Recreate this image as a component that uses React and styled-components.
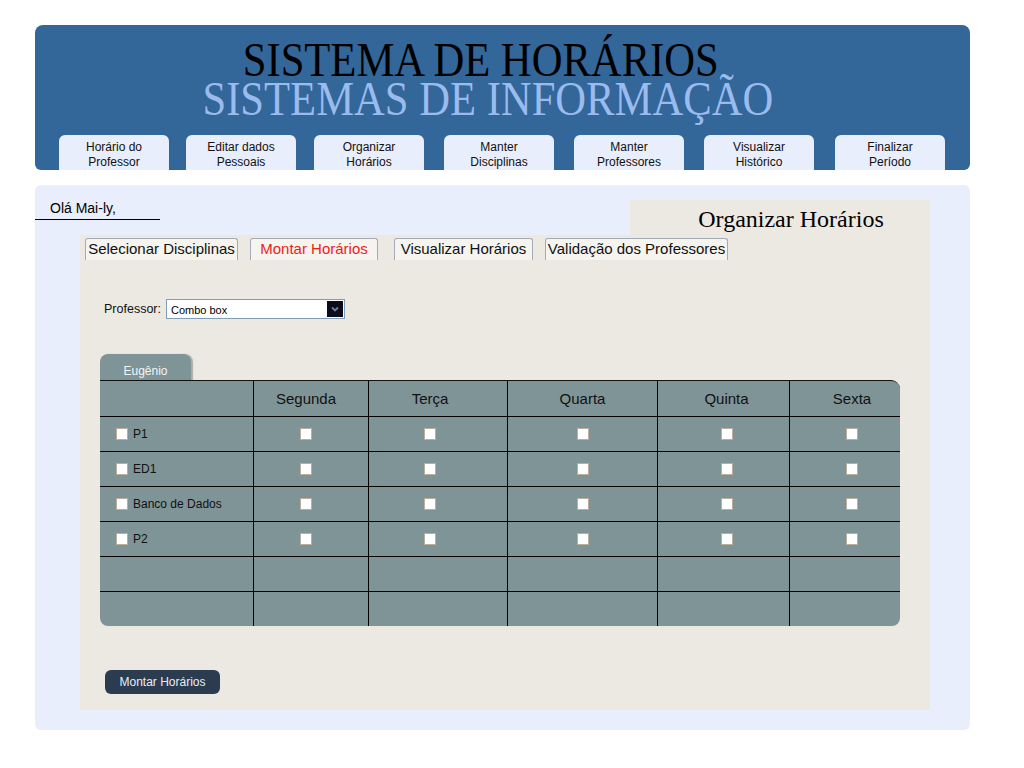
import React from "react";
import styled, { createGlobalStyle } from "styled-components";

const GlobalStyle = createGlobalStyle`
  body {
    margin: 0;
    background: #ffffff;
    font-family: "Liberation Sans", Arial, sans-serif;
    color: #000;
  }
`;

const Page = styled.div`
  width: 935px;
  padding: 25px 0 0 35px;
`;

const Header = styled.header`
  height: 145px;
  box-sizing: border-box;
  padding-top: 15px;
  background: #336699;
  border-radius: 8px 8px 6px 6px;
  display: flex;
  flex-direction: column;
`;

const TitleBlock = styled.div`
  padding-right: 33px;
  transform: scaleX(0.888);
  font-family: "Liberation Serif", "Times New Roman", serif;
  font-size: 48px;
  line-height: 39px;
  text-align: center;
`;

const TitleLine = styled.div`
  color: ${(p) => p.$color};
  margin-right: ${(p) => p.$shift || 0}px;
  white-space: nowrap;
`;

const Nav = styled.nav`
  margin-top: auto;
  display: flex;
  padding-left: 24px;
`;

const NavButton = styled.div`
  width: 110px;
  height: 35px;
  margin-left: ${(p) => p.$ml || 0}px;
  box-sizing: border-box;
  padding-top: 5px;
  background: #e8eefb;
  border-radius: 6px 6px 0 0;
  font-size: 12px;
  line-height: 15px;
  text-align: center;
  color: #111;
`;

const Main = styled.main`
  margin-top: 15px;
  height: 545px;
  box-sizing: border-box;
  padding-top: 15px;
  background: #e8eefb;
  border-radius: 6px;
`;

const TopRow = styled.div`
  display: flex;
  justify-content: space-between;
  align-items: flex-start;
  height: 35px;
`;

const Greeting = styled.div`
  width: 125px;
  box-sizing: border-box;
  padding: 0 0 3px 15px;
  border-bottom: 1px solid #000;
  font-size: 14px;
  line-height: 16px;
`;

const PageTitle = styled.div`
  width: 300px;
  height: 35px;
  box-sizing: border-box;
  margin-right: 40px;
  padding: 3px 0 0 22px;
  background: #ece9e3;
  font-family: "Liberation Serif", "Times New Roman", serif;
  font-size: 24px;
  line-height: 32px;
  text-align: center;
`;

const Panel = styled.section`
  margin-left: 45px;
  width: 850px;
  height: 475px;
  box-sizing: border-box;
  padding: 3px 0 0 5px;
  background: #ece9e3;
`;

const Tabs = styled.div`
  display: flex;
  height: 22px;
`;

const Tab = styled.div`
  width: ${(p) => p.$w}px;
  margin-left: ${(p) => p.$ml || 0}px;
  box-sizing: border-box;
  height: 22px;
  border: 1px solid #a3acb6;
  border-bottom: none;
  border-radius: 3px 3px 0 0;
  background: #f5f4ef;
  font-size: 15px;
  line-height: 20px;
  text-align: center;
  white-space: nowrap;
  color: ${(p) => (p.$active ? "#ee1c1c" : "#111")};
`;

const FieldRow = styled.div`
  display: flex;
  align-items: center;
  margin: 39px 0 0 19px;
  height: 20px;
`;

const FieldLabel = styled.label`
  font-size: 12.5px;
  margin-right: 5px;
  color: #111;
`;

const Select = styled.div`
  width: 179px;
  height: 20px;
  box-sizing: border-box;
  border: 1px solid #7f9db9;
  background: #fff;
  display: flex;
  align-items: center;
  padding: 0 1px 0 4px;
  font-size: 11px;
  color: #000;
`;

const SelectText = styled.span`
  flex: 1;
  padding-top: 2px;
`;

const SelectArrow = styled.span`
  width: 16px;
  height: 16px;
  background: #0b0b1a;
  display: flex;
  align-items: center;
  justify-content: center;
`;

const Schedule = styled.div`
  margin: 35px 0 0 15px;
  width: 800px;
`;

const TeacherTab = styled.div`
  width: 91px;
  height: 26px;
  box-sizing: border-box;
  padding-top: 9px;
  background: #7f9497;
  border-radius: 8px 8px 0 0;
  box-shadow: 2px 0 1px rgba(60, 60, 60, 0.35);
  color: #f2f4f4;
  font-size: 12px;
  line-height: 16px;
  text-align: center;
`;

const Grid = styled.div`
  display: grid;
  grid-template-columns: 153px 115px 139px 150px 132px 111px;
  grid-auto-rows: 35px;
  background: #7f9497;
  border-top: 1px solid #111;
  border-radius: 0 9px 8px 8px;
  overflow: hidden;
`;

const Cell = styled.div`
  box-sizing: border-box;
  border-left: ${(p) => (p.$first ? "none" : "1px solid #000")};
  border-top: ${(p) => (p.$head ? "none" : "1px solid #000")};
  display: flex;
  align-items: center;
  justify-content: ${(p) => (p.$first ? "flex-start" : "center")};
  padding-left: ${(p) => (p.$first ? 16 : Math.max(0, 2 * (p.$shift || 0)))}px;
  padding-right: ${(p) => (p.$first ? 0 : Math.max(0, -2 * (p.$shift || 0)))}px;
  font-size: ${(p) => (p.$head ? 15 : 12)}px;
  color: #111;
`;

const Check = styled.span`
  width: 12px;
  height: 12px;
  box-sizing: border-box;
  background: #fff;
  border: 1px solid #bcae9c;
  margin-right: ${(p) => (p.$withLabel ? 5 : 0)}px;
  flex-shrink: 0;
`;

const ActionButton = styled.button`
  margin: 44px 0 0 20px;
  width: 115px;
  height: 24px;
  border: none;
  border-radius: 6px;
  background: #2b3b50;
  color: #e8eef0;
  font-family: "Liberation Sans", Arial, sans-serif;
  font-size: 12px;
  padding: 0;
`;

const navItems = [
  { lines: ["Horário do", "Professor"], ml: 0 },
  { lines: ["Editar dados", "Pessoais"], ml: 17 },
  { lines: ["Organizar", "Horários"], ml: 18 },
  { lines: ["Manter", "Disciplinas"], ml: 20 },
  { lines: ["Manter", "Professores"], ml: 20 },
  { lines: ["Visualizar", "Histórico"], ml: 20 },
  { lines: ["Finalizar", "Período"], ml: 21 },
];

const tabs = [
  { label: "Selecionar Disciplinas", w: 153 },
  { label: "Montar Horários", w: 128, ml: 12, active: true },
  { label: "Visualizar Horários", w: 139, ml: 16 },
  { label: "Validação dos Professores", w: 183, ml: 12 },
];

const days = [
  { name: "Segunda", shift: -5 },
  { name: "Terça", shift: -8 },
  { name: "Quarta", shift: 0 },
  { name: "Quinta", shift: 3 },
  { name: "Sexta", shift: 7 },
];
const subjects = ["P1", "ED1", "Banco de Dados", "P2", "", ""];

function App() {
  return (
    <Page>
      <GlobalStyle />
      <Header>
        <TitleBlock>
          <TitleLine $color="#000" $shift={16}>
            SISTEMA DE HORÁRIOS
          </TitleLine>
          <TitleLine $color="#99bbee">SISTEMAS DE INFORMAÇÃO</TitleLine>
        </TitleBlock>
        <Nav>
          {navItems.map(({ lines, ml }) => (
            <NavButton key={lines.join(" ")} $ml={ml}>
              {lines[0]}
              <br />
              {lines[1]}
            </NavButton>
          ))}
        </Nav>
      </Header>

      <Main>
        <TopRow>
          <Greeting>Olá Mai-ly,</Greeting>
          <PageTitle>Organizar Horários</PageTitle>
        </TopRow>
        <Panel>
          <Tabs>
            {tabs.map((t) => (
              <Tab key={t.label} $w={t.w} $ml={t.ml} $active={t.active}>
                {t.label}
              </Tab>
            ))}
          </Tabs>

          <FieldRow>
            <FieldLabel>Professor:</FieldLabel>
            <Select>
              <SelectText>Combo box</SelectText>
              <SelectArrow>
                <svg width="10" height="8" viewBox="0 0 10 8">
                  <path
                    d="M2 2.5 L5 5.5 L8 2.5"
                    fill="none"
                    stroke="#6f7f9f"
                    strokeWidth="1.8"
                  />
                </svg>
              </SelectArrow>
            </Select>
          </FieldRow>

          <Schedule>
            <TeacherTab>Eugênio</TeacherTab>
            <Grid>
              <Cell $first $head />
              {days.map((d) => (
                <Cell key={d.name} $head $shift={d.shift}>
                  {d.name}
                </Cell>
              ))}
              {subjects.map((s, i) => (
                <React.Fragment key={i}>
                  <Cell $first>
                    {s && (
                      <>
                        <Check $withLabel />
                        {s}
                      </>
                    )}
                  </Cell>
                  {days.map((d) => (
                    <Cell key={d.name} $shift={d.shift}>
                      {s && <Check />}
                    </Cell>
                  ))}
                </React.Fragment>
              ))}
            </Grid>
          </Schedule>

          <ActionButton>Montar Horários</ActionButton>
        </Panel>
      </Main>
    </Page>
  );
}

export default App;
